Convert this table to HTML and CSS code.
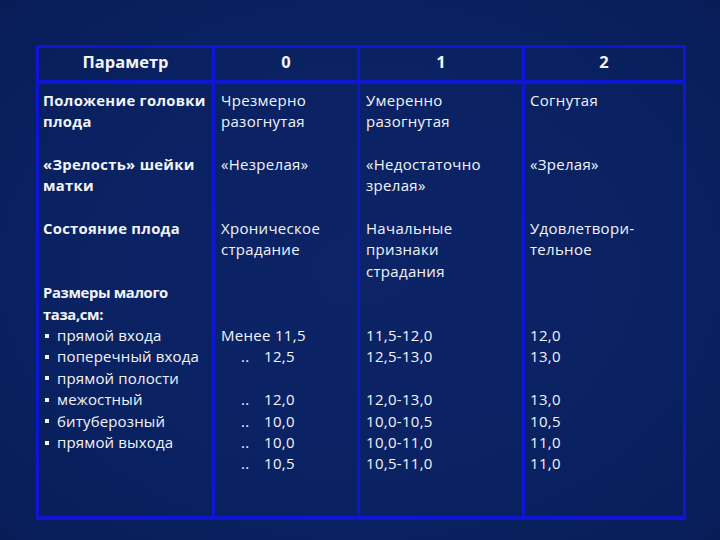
FILE: index.html
```html
<!DOCTYPE html>
<html lang="ru">
<head>
<meta charset="utf-8">
<title>Таблица</title>
<link rel="stylesheet" href="styles.css">
</head>
<body>
<div class="slide">
  <table class="grid">
    <colgroup>
      <col class="c1"><col class="c2"><col class="c3"><col class="c4">
    </colgroup>
    <thead>
      <tr>
        <th>Параметр</th>
        <th>0</th>
        <th>1</th>
        <th>2</th>
      </tr>
    </thead>
    <tbody>
      <tr class="r first">
        <td class="b">Положение головки<br>плода</td>
        <td>Чрезмерно<br>разогнутая</td>
        <td>Умеренно<br>разогнутая</td>
        <td>Согнутая</td>
      </tr>
      <tr class="r">
        <td class="b">«Зрелость» шейки<br>матки</td>
        <td>«Незрелая»</td>
        <td>«Недостаточно<br>зрелая»</td>
        <td>«Зрелая»</td>
      </tr>
      <tr class="r3">
        <td class="b">Состояние плода</td>
        <td>Хроническое<br>страдание</td>
        <td>Начальные<br>признаки<br>страдания</td>
        <td>Удовлетвори-<br>тельное</td>
      </tr>
      <tr class="last">
        <td>
          <div class="b">Размеры малого</div>
          <div class="b">таза,см:</div>
          <div class="li"><span class="sq"></span>прямой входа</div>
          <div class="li"><span class="sq"></span>поперечный входа</div>
          <div class="li"><span class="sq"></span>прямой полости</div>
          <div class="li"><span class="sq"></span>межостный</div>
          <div class="li"><span class="sq"></span>битуберозный</div>
          <div class="li"><span class="sq"></span>прямой выхода</div>
        </td>
        <td class="num">
          <div>&nbsp;</div>
          <div>&nbsp;</div>
          <div>Менее 11,5</div>
          <div><span class="dots">..</span>12,5</div>
          <div>&nbsp;</div>
          <div><span class="dots">..</span>12,0</div>
          <div><span class="dots">..</span>10,0</div>
          <div><span class="dots">..</span>10,0</div>
          <div><span class="dots">..</span>10,5</div>
        </td>
        <td class="num">
          <div>&nbsp;</div>
          <div>&nbsp;</div>
          <div>11,5-12,0</div>
          <div>12,5-13,0</div>
          <div>&nbsp;</div>
          <div>12,0-13,0</div>
          <div>10,0-10,5</div>
          <div>10,0-11,0</div>
          <div>10,5-11,0</div>
        </td>
        <td class="num">
          <div>&nbsp;</div>
          <div>&nbsp;</div>
          <div>12,0</div>
          <div>13,0</div>
          <div>&nbsp;</div>
          <div>13,0</div>
          <div>10,5</div>
          <div>11,0</div>
          <div>11,0</div>
        </td>
      </tr>
    </tbody>
  </table>
</div>
</body>
</html>
```

FILE: styles.css
```css
html, body {
  margin: 0;
  padding: 0;
}
body {
  width: 720px;
  height: 540px;
  overflow: hidden;
  background: #0a2160;
}
.slide {
  width: 720px;
  height: 540px;
  box-sizing: border-box;
  padding: 45px 0 0 36px;
  background: radial-gradient(ellipse at 50% 50%, #0c2466 0%, #0a2262 60%, #081d58 100%);
  font-family: "Open Sans", "Noto Sans", "DejaVu Sans", sans-serif;
  color: #f2f4f8;
  font-size: 15px;
}
.grid {
  border-collapse: collapse;
  table-layout: fixed;
  width: 647px;
}
.c1 { width: 176px; }
.c2 { width: 145px; }
.c3 { width: 165px; }
.c4 { width: 161px; }
.grid th,
.grid td {
  border-left: 3px solid #0d16d4;
  border-right: 3px solid #0d16d4;
  padding: 0 6px;
  vertical-align: top;
  line-height: 21.4px;
}
.grid td:first-child {
  padding-left: 4px;
  padding-right: 0;
}
.grid td:last-child {
  padding-left: 5px;
}
.grid th {
  border-top: 3px solid #0d16d4;
  border-bottom: 4px solid #0d16d4;
  height: 35px;
  padding: 0 0 4px;
  box-sizing: border-box;
  font-weight: 700;
  font-size: 16.5px;
  text-align: center;
  vertical-align: middle;
}
.grid .r td {
  padding-bottom: 21.4px;
}
.grid .first td {
  padding-top: 6px;
}
.grid .last td {
  height: 236px;
  box-sizing: border-box;
  border-bottom: 4px solid #0d16d4;
}
.b {
  font-weight: 700;
  font-size: 14.8px;
  letter-spacing: -0.35px;
  white-space: nowrap;
}
.grid td {
  letter-spacing: 0.3px;
}
.li {
  display: flex;
  align-items: center;
  letter-spacing: 0.15px;
  white-space: nowrap;
}
.sq {
  display: inline-block;
  width: 4px;
  height: 4px;
  background: #f2f4f8;
  margin: 0 8px 0 2px;
}
.dots {
  display: inline-block;
  width: 23px;
  margin-left: 20px;
}
```
